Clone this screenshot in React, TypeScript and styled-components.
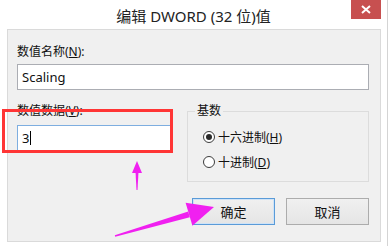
import React from 'react';
import styled, { createGlobalStyle } from 'styled-components';

const GlobalStyle = createGlobalStyle`
  html, body {
    margin: 0;
    padding: 0;
    background: #fff;
  }
  body {
    font-family: "Noto Sans", "Noto Sans CJK SC", sans-serif;
    color: #000;
  }
`;

const Window = styled.div`
  position: relative;
  width: 388px;
  height: 246px;
  box-sizing: border-box;
  border-right: 1px solid #d4d4d4;
  background: #fff;
  display: flex;
  flex-direction: column;
  overflow: hidden;
`;

const TitleBar = styled.div`
  height: 29px;
  display: grid;
  grid-template-columns: 1fr auto 1fr;
  align-items: start;
`;

const Title = styled.div`
  grid-column: 2;
  margin-top: 6px;
  font-size: 15px;
  line-height: 20px;
  color: #222;
  white-space: nowrap;
`;

const CloseButton = styled.div`
  grid-column: 3;
  justify-self: end;
  width: 30px;
  height: 19px;
  margin-right: 6px;
  background: #c75050;
  display: flex;
  align-items: center;
  justify-content: center;
`;

const Body = styled.div`
  margin: 0 6px 4px 7px;
  background: #f0f0f0;
  border: 1px solid #dadada;
  padding: 14px 11px 16px 9px;
  display: flex;
  flex-direction: column;
`;

const Label = styled.div`
  font-size: 12px;
  line-height: 16px;
  color: #111;
  white-space: nowrap;
`;

const Key = styled.span`
  text-decoration: underline;
`;

const TextBox = styled.div<{ $focused?: boolean; $width?: number }>`
  box-sizing: border-box;
  height: 26px;
  width: ${p => (p.$width ? `${p.$width}px` : '100%')};
  margin-top: ${p => (p.$focused ? 6 : 4)}px;
  background: #fff;
  border: 1px solid ${p => (p.$focused ? '#7eaee0' : '#abadb3')};
  padding: 0 4px;
  display: flex;
  align-items: center;
  font-size: 13px;
  color: #111;
`;

const Caret = styled.span`
  display: inline-block;
  width: 1px;
  height: 14px;
  margin-left: 1px;
  background: #000;
`;

const Row = styled.div`
  margin-top: 13px;
  display: flex;
  align-items: flex-start;
`;

const Column = styled.div`
  display: flex;
  flex-direction: column;
`;

const GroupBox = styled.fieldset`
  margin: 0 0 0 15px;
  width: 183px;
  box-sizing: border-box;
  border: 1px solid #dcdcdc;
  padding: 0 0 11px 15px;
  min-inline-size: 0;
`;

const Legend = styled.legend`
  margin-left: -8px;
  padding: 0 2px;
  font-size: 12px;
  line-height: 16px;
  color: #111;
`;

const RadioRow = styled.div<{ $first?: boolean }>`
  margin-top: ${p => (p.$first ? 10 : 9)}px;
  display: flex;
  align-items: center;
  gap: 3px;
  height: 16px;
  font-size: 12px;
  color: #111;
`;

const RadioCircle = styled.span<{ $checked?: boolean }>`
  box-sizing: border-box;
  width: 12px;
  height: 12px;
  border-radius: 50%;
  border: 1px solid #3c3c3c;
  background: #fff;
  display: flex;
  align-items: center;
  justify-content: center;
  &::after {
    content: '';
    width: 6px;
    height: 6px;
    border-radius: 50%;
    background: ${p => (p.$checked ? '#2a2a2a' : 'transparent')};
  }
`;

const ButtonRow = styled.div`
  margin-top: 16px;
  display: flex;
  justify-content: flex-end;
  gap: 11px;
`;

const Button = styled.div<{ $default?: boolean }>`
  box-sizing: border-box;
  width: 83px;
  height: 27px;
  display: flex;
  align-items: center;
  justify-content: center;
  font-size: 13px;
  color: #111;
  border: 1px solid ${p => (p.$default ? '#5a9bd8' : '#acacac')};
  background: linear-gradient(#f0f0f0, #e5e5e5);
  box-shadow: ${p => (p.$default ? 'inset 0 0 0 1px #cfe3f7' : 'none')};
`;

const Annotations = styled.svg`
  position: absolute;
  left: 0;
  top: 0;
  pointer-events: none;
`;

const App = () => (
  <>
    <GlobalStyle />
    <Window>
      <TitleBar>
        <Title>编辑 DWORD (32 位)值</Title>
        <CloseButton>
          <svg width="10" height="9" viewBox="0 0 10 9">
            <path d="M1 1 L9 8 M9 1 L1 8" stroke="#fff" strokeWidth="2" />
          </svg>
        </CloseButton>
      </TitleBar>
      <Body>
        <Label>数值名称(<Key>N</Key>):</Label>
        <TextBox>Scaling</TextBox>
        <Row>
          <Column>
            <Label>数值数据(<Key>V</Key>):</Label>
            <TextBox $focused $width={155}>
              <span>3</span>
              <Caret />
            </TextBox>
          </Column>
          <GroupBox>
            <Legend>基数</Legend>
            <RadioRow $first>
              <RadioCircle $checked />
              <span>十六进制(<Key>H</Key>)</span>
            </RadioRow>
            <RadioRow>
              <RadioCircle />
              <span>十进制(<Key>D</Key>)</span>
            </RadioRow>
          </GroupBox>
        </Row>
        <ButtonRow>
          <Button $default>确定</Button>
          <Button>取消</Button>
        </ButtonRow>
      </Body>
      <Annotations width="389" height="246" viewBox="0 0 389 246">
        <rect x="3.5" y="110.5" width="168" height="41" fill="none" stroke="#ff3535" strokeWidth="3" />
        <polygon points="137,161 132,173 142,173" fill="#f020f0" />
        <polygon points="135.5,172 138.5,172 137.5,190 136.5,190" fill="#f020f0" />
        <polygon points="214,207 185.6,202.8 192.4,225.8" fill="#f020f0" />
        <polygon points="188.2,211.4 189.8,217.2 115.2,236.7 114.8,235.3" fill="#f020f0" />
      </Annotations>
    </Window>
  </>
);

export default App;
